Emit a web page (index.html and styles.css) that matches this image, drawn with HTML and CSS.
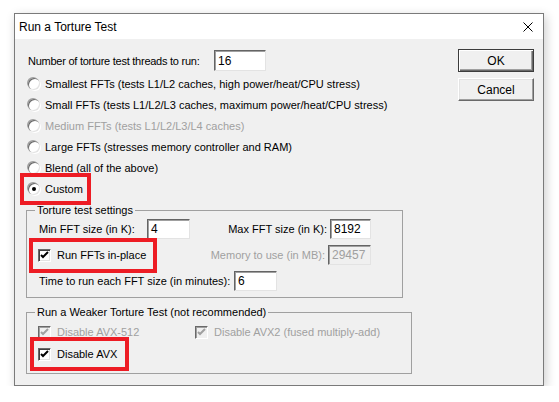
FILE: index.html
```html
<!DOCTYPE html>
<html lang="en">
<head>
    <meta charset="UTF-8">
    <title>Run a Torture Test</title>
    <link rel="stylesheet" href="styles.css">
</head>
<body>
    <div class="window">
        <div class="titlebar">
            <span class="title">Run a Torture Test</span>
            <svg class="close" width="10" height="10" viewBox="0 0 10 10">
                <path d="M0.5 0.5 L9.5 9.5 M9.5 0.5 L0.5 9.5" stroke="#000" stroke-width="1" fill="none"/>
            </svg>
        </div>

        <div class="content">
            <div class="main">
                <div class="threads">
                    <span class="threads-label">Number of torture test threads to run:</span>
                    <span class="field w52">16</span>
                </div>

                <div class="opt"><span class="radio"></span>Smallest FFTs (tests L1/L2 caches, high power/heat/CPU stress)</div>
                <div class="opt"><span class="radio"></span>Small FFTs (tests L1/L2/L3 caches, maximum power/heat/CPU stress)</div>
                <div class="opt disabled"><span class="radio"></span>Medium FFTs (tests L1/L2/L3/L4 caches)</div>
                <div class="opt"><span class="radio"></span>Large FFTs (stresses memory controller and RAM)</div>
                <div class="opt"><span class="radio"></span>Blend (all of the above)</div>
                <div class="opt"><span class="hl hl-custom"><span class="radio on"></span>Custom</span></div>

                <fieldset class="group settings">
                    <legend>Torture test settings</legend>
                    <div class="grow">
                        <span class="lbl min-lbl">Min FFT size (in K):</span>
                        <span class="field w43">4</span>
                        <span class="right">
                            <span class="lbl">Max FFT size (in K):</span>
                            <span class="field w41">8192</span>
                        </span>
                    </div>
                    <div class="grow">
                        <span class="hl hl-inplace"><span class="check on"><svg width="11" height="11" viewBox="0 0 11 11"><path d="M2 5 L4 7 L9 2" stroke="#000" stroke-width="2" fill="none"/></svg></span>Run FFTs in-place</span>
                        <span class="right disabled">
                            <span class="lbl">Memory to use (in MB):</span>
                            <span class="field w43 off">29457</span>
                        </span>
                    </div>
                    <div class="grow">
                        <span class="lbl time-lbl">Time to run each FFT size (in minutes):</span>
                        <span class="field w43">6</span>
                    </div>
                </fieldset>

                <fieldset class="group weaker">
                    <legend>Run a Weaker Torture Test (not recommended)</legend>
                    <div class="grow">
                        <span class="chk disabled avx512"><span class="check off"><svg width="11" height="11" viewBox="0 0 11 11"><path d="M2 5 L4 7 L9 2" stroke="#a0a0a0" stroke-width="2" fill="none"/></svg></span>Disable AVX-512</span>
                        <span class="chk disabled"><span class="check off"><svg width="11" height="11" viewBox="0 0 11 11"><path d="M2 5 L4 7 L9 2" stroke="#a0a0a0" stroke-width="2" fill="none"/></svg></span>Disable AVX2 (fused multiply-add)</span>
                    </div>
                    <div class="grow">
                        <span class="hl hl-avx"><span class="check on"><svg width="11" height="11" viewBox="0 0 11 11"><path d="M2 5 L4 7 L9 2" stroke="#000" stroke-width="2" fill="none"/></svg></span>Disable AVX</span>
                    </div>
                </fieldset>
            </div>

            <div class="side">
                <button class="btn default">OK</button>
                <button class="btn">Cancel</button>
            </div>
        </div>
    </div>
</body>
</html>
```

FILE: styles.css
```css
* {
    box-sizing: border-box;
    margin: 0;
    padding: 0;
}

body {
    font-family: 'Liberation Sans', Arial, sans-serif;
    font-size: 11px;
    color: #000;
    background: #fff;
    padding: 13px 0 0 14px;
}

.window {
    width: 530px;
    height: 373px;
    border: 1px solid #7a7a7a;
    background: #f0f0f0;
    box-shadow: 2px 3px 10px rgba(0, 0, 0, 0.2);
    display: flex;
    flex-direction: column;
}

.titlebar {
    height: 25px;
    background: #fff;
    display: flex;
    align-items: center;
    justify-content: space-between;
    padding: 0 10px 0 4px;
}

.title {
    font-size: 12px;
}

.content {
    flex: 1;
    display: flex;
    padding: 10px 9px 0 11px;
}

.main {
    width: 377px;
    white-space: nowrap;
}

.threads {
    display: flex;
    align-items: center;
    height: 21px;
    margin-top: 1px;
    padding-left: 2px;
}

.threads-label {
    width: 186px;
    letter-spacing: -0.25px;
}

.field {
    display: flex;
    align-items: center;
    height: 20px;
    padding-left: 3px;
    background: #fff;
    border: 1px solid;
    border-color: #646464 #e3e3e3 #e3e3e3 #646464;
    box-shadow: inset 1px 1px 0 #a0a0a0;
    font-size: 12px;
}

.threads .field {
    height: 21px;
}

.w52 { width: 52px; }
.w43 { width: 43px; }
.w41 { width: 41px; }

.field.off {
    background: #f0f0f0;
    color: #a0a0a0;
}

.opt {
    display: flex;
    align-items: center;
    height: 21px;
    padding-left: 2px;
}

.opt:nth-of-type(2) {
    margin-top: 2px;
}

.disabled {
    color: #a0a0a0;
}

.radio {
    width: 12px;
    height: 12px;
    border-radius: 50%;
    margin-right: 5px;
    background: #fff;
    box-shadow: inset 1px 1px 0 #696969, inset -1px -1px 0 #e3e3e3, -1px -1px 0 #a0a0a0, 1px 1px 0 #fff;
    display: flex;
    align-items: center;
    justify-content: center;
}

.radio.on::after {
    content: '';
    width: 4px;
    height: 4px;
    border-radius: 50%;
    background: #000;
}

.hl {
    display: inline-flex;
    align-items: center;
    outline: 4px solid #ed1c24;
}

.hl-custom {
    height: 16px;
    padding-right: 0;
    outline-offset: 4px;
}

.hl-inplace {
    height: 17px;
    padding-right: 2px;
    outline-offset: 5px;
}

.hl-avx {
    height: 18px;
    padding-right: 4px;
    outline-offset: 4px;
}

.group {
    border: 1px solid #a0a0a0;
    padding: 2px 31px 6px 11px;
}

.group legend {
    margin-left: -3px;
    padding: 0 2px;
    line-height: 14px;
}

.settings {
    margin-top: 4px;
}

.weaker {
    margin-top: 7px;
    padding-top: 3px;
    padding-bottom: 9px;
}

.grow {
    display: flex;
    align-items: center;
    height: 20px;
    margin-bottom: 6px;
}

.grow:last-child {
    margin-bottom: 0;
}

.weaker .grow {
    margin-bottom: 2px;
}

.weaker .grow:last-child {
    margin-bottom: 0;
}

.lbl {
    padding-left: 1px;
}

.min-lbl {
    width: 109px;
}

.time-lbl {
    width: 196px;
}

.right {
    margin-left: auto;
    display: flex;
    align-items: center;
    gap: 3px;
}

.check {
    width: 13px;
    height: 13px;
    margin-right: 6px;
    background: #fff;
    border: 1px solid;
    border-color: #696969 #fff #fff #696969;
    box-shadow: inset 1px 1px 0 #404040, inset -1px -1px 0 #e3e3e3;
    display: flex;
    align-items: center;
    justify-content: center;
}

.check.off {
    background: #f0f0f0;
    box-shadow: inset 1px 1px 0 #a0a0a0;
}

.chk {
    display: inline-flex;
    align-items: center;
}

.avx512 {
    width: 157px;
}

.side {
    margin-left: auto;
    display: flex;
    flex-direction: column;
    gap: 6px;
}

.btn {
    width: 76px;
    height: 23px;
    font-family: 'Liberation Sans', Arial, sans-serif;
    font-size: 12px;
    background: #f0f0f0;
    border: 1px solid;
    border-color: #fff #696969 #696969 #fff;
    box-shadow: inset -1px -1px 0 #a0a0a0, inset 1px 1px 0 #e3e3e3;
}

.btn.default {
    border: 1px solid #3c3c3c;
    box-shadow: inset 1px 1px 0 #fff, inset -1px -1px 0 #696969, inset -2px -2px 0 #a0a0a0;
}
```
